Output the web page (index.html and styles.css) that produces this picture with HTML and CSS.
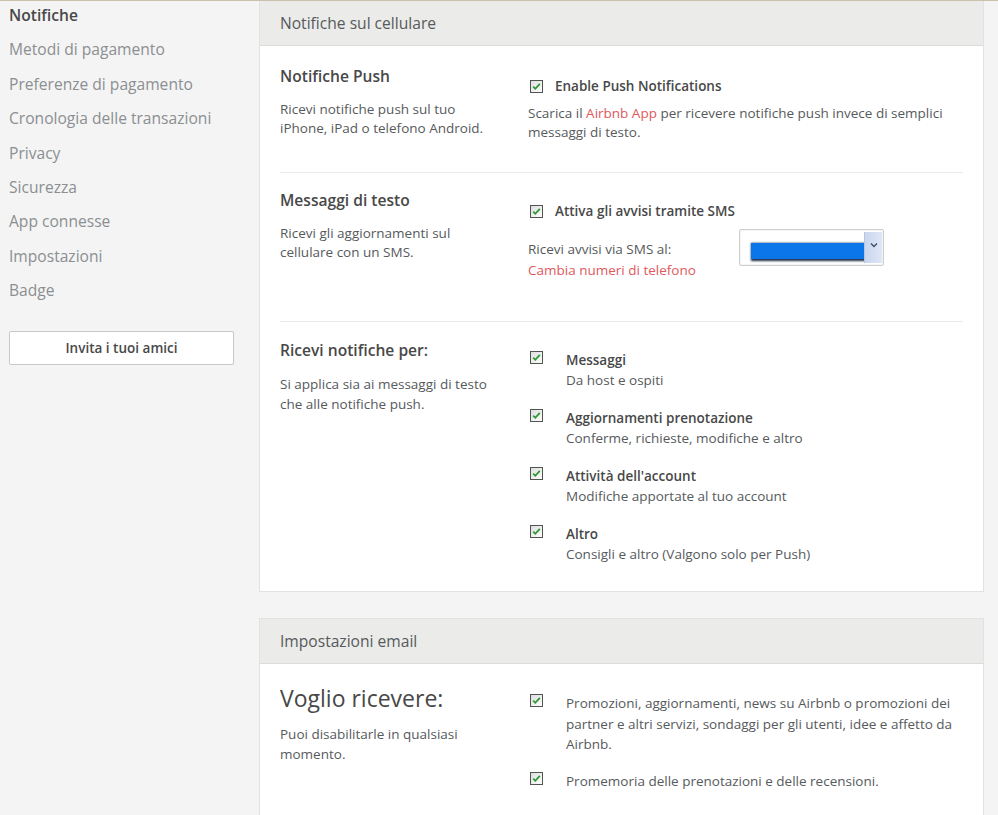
FILE: index.html
```html
<!DOCTYPE html>
<html lang="it">
<head>
<meta charset="utf-8">
<title>Notifiche</title>
<link rel="stylesheet" href="styles.css">
</head>
<body>
<div class="topline"></div>
<div class="layout">
  <aside class="sidebar">
    <ul class="nav">
      <li class="active">Notifiche</li>
      <li>Metodi di pagamento</li>
      <li>Preferenze di pagamento</li>
      <li>Cronologia delle transazioni</li>
      <li>Privacy</li>
      <li>Sicurezza</li>
      <li>App connesse</li>
      <li>Impostazioni</li>
      <li>Badge</li>
    </ul>
    <button class="invite">Invita i tuoi amici</button>
  </aside>

  <main class="main">
    <section class="card">
      <div class="card-header">Notifiche sul cellulare</div>
      <div class="card-body">
        <div class="row row-first">
          <div class="col-left">
            <h3>Notifiche Push</h3>
            <p>Ricevi notifiche push sul tuo<br>iPhone, iPad o telefono Android.</p>
          </div>
          <div class="col-right">
            <div class="check-line">
              <svg class="cb" viewBox="0 0 13 13"><defs><linearGradient id="g1" x1="0" y1="0" x2="1" y2="1"><stop offset="0" stop-color="#dcdcdc"/><stop offset="1" stop-color="#ffffff"/></linearGradient></defs><rect x="0.5" y="0.5" width="12" height="12" fill="url(#g1)" stroke="#4f5650"/><path d="M3.2 6.6 L5.3 8.8 L9.8 3.8" fill="none" stroke="#2f9a35" stroke-width="1.8"/></svg>
              <span class="strong">Enable Push Notifications</span>
            </div>
            <p class="note">Scarica il <span class="red">Airbnb App</span> per ricevere notifiche push invece di semplici messaggi di testo.</p>
          </div>
        </div>

        <div class="row row-sms">
          <div class="col-left">
            <h3>Messaggi di testo</h3>
            <p>Ricevi gli aggiornamenti sul<br>cellulare con un SMS.</p>
          </div>
          <div class="col-right">
            <div class="check-line">
              <svg class="cb" viewBox="0 0 13 13"><rect x="0.5" y="0.5" width="12" height="12" fill="url(#g1)" stroke="#4f5650"/><path d="M3.2 6.6 L5.3 8.8 L9.8 3.8" fill="none" stroke="#2f9a35" stroke-width="1.8"/></svg>
              <span class="strong">Attiva gli avvisi tramite SMS</span>
            </div>
            <div class="sms-line">
              <div class="sms-text">
                <div>Ricevi avvisi via SMS al:</div>
                <div class="red">Cambia numeri di telefono</div>
              </div>
              <div class="select">
                <div class="select-value"><span class="redact"></span></div>
                <div class="select-arrow">
                  <svg viewBox="0 0 8 6" width="8" height="6"><path d="M1 1.5 L4 4.5 L7 1.5" fill="none" stroke="#3b4f6e" stroke-width="1.4"/></svg>
                </div>
              </div>
            </div>
          </div>
        </div>

        <div class="row row-last">
          <div class="col-left">
            <h3>Ricevi notifiche per:</h3>
            <p class="loose">Si applica sia ai messaggi di testo<br>che alle notifiche push.</p>
          </div>
          <div class="col-right">
            <ul class="opts">
              <li>
                <svg class="cb" viewBox="0 0 13 13"><rect x="0.5" y="0.5" width="12" height="12" fill="url(#g1)" stroke="#4f5650"/><path d="M3.2 6.6 L5.3 8.8 L9.8 3.8" fill="none" stroke="#2f9a35" stroke-width="1.8"/></svg>
                <div><div class="strong">Messaggi</div><div>Da host e ospiti</div></div>
              </li>
              <li>
                <svg class="cb" viewBox="0 0 13 13"><rect x="0.5" y="0.5" width="12" height="12" fill="url(#g1)" stroke="#4f5650"/><path d="M3.2 6.6 L5.3 8.8 L9.8 3.8" fill="none" stroke="#2f9a35" stroke-width="1.8"/></svg>
                <div><div class="strong">Aggiornamenti prenotazione</div><div>Conferme, richieste, modifiche e altro</div></div>
              </li>
              <li>
                <svg class="cb" viewBox="0 0 13 13"><rect x="0.5" y="0.5" width="12" height="12" fill="url(#g1)" stroke="#4f5650"/><path d="M3.2 6.6 L5.3 8.8 L9.8 3.8" fill="none" stroke="#2f9a35" stroke-width="1.8"/></svg>
                <div><div class="strong">Attività dell'account</div><div>Modifiche apportate al tuo account</div></div>
              </li>
              <li>
                <svg class="cb" viewBox="0 0 13 13"><rect x="0.5" y="0.5" width="12" height="12" fill="url(#g1)" stroke="#4f5650"/><path d="M3.2 6.6 L5.3 8.8 L9.8 3.8" fill="none" stroke="#2f9a35" stroke-width="1.8"/></svg>
                <div><div class="strong">Altro</div><div>Consigli e altro (Valgono solo per Push)</div></div>
              </li>
            </ul>
          </div>
        </div>
      </div>
    </section>

    <section class="card card-email">
      <div class="card-header">Impostazioni email</div>
      <div class="card-body">
        <div class="row row-email">
          <div class="col-left">
            <h2>Voglio ricevere:</h2>
            <p class="loose">Puoi disabilitarle in qualsiasi<br>momento.</p>
          </div>
          <div class="col-right">
            <ul class="opts opts-email">
              <li>
                <svg class="cb" viewBox="0 0 13 13"><rect x="0.5" y="0.5" width="12" height="12" fill="url(#g1)" stroke="#4f5650"/><path d="M3.2 6.6 L5.3 8.8 L9.8 3.8" fill="none" stroke="#2f9a35" stroke-width="1.8"/></svg>
                <div>Promozioni, aggiornamenti, news su Airbnb o promozioni dei partner e altri servizi, sondaggi per gli utenti, idee e affetto da Airbnb.</div>
              </li>
              <li>
                <svg class="cb" viewBox="0 0 13 13"><rect x="0.5" y="0.5" width="12" height="12" fill="url(#g1)" stroke="#4f5650"/><path d="M3.2 6.6 L5.3 8.8 L9.8 3.8" fill="none" stroke="#2f9a35" stroke-width="1.8"/></svg>
                <div>Promemoria delle prenotazioni e delle recensioni.</div>
              </li>
            </ul>
          </div>
        </div>
      </div>
    </section>
  </main>
</div>
</body>
</html>
```

FILE: styles.css
```css
* { box-sizing: border-box; }

html, body {
  margin: 0;
  padding: 0;
  background: #f4f4f4;
  font-family: "Open Sans", "Liberation Sans", sans-serif;
  color: #565a5c;
  overflow: hidden;
}

.topline {
  height: 1px;
  background: #c9c1ab;
}

.layout {
  display: flex;
  align-items: flex-start;
}

/* Sidebar */
.sidebar {
  width: 259px;
  flex: none;
  padding-left: 9px;
}

.nav {
  list-style: none;
  margin: -3px 0 0;
  padding: 0;
}

.nav li {
  font-size: 15.6px;
  line-height: 34.4px;
  color: #8b8f91;
  white-space: nowrap;
}

.nav li.active {
  color: #484848;
  font-weight: 600;
}

.invite {
  display: block;
  margin-top: 23px;
  width: 225px;
  height: 34px;
  background: #fff;
  border: 1px solid #c8c8c8;
  border-radius: 2px;
  font-family: inherit;
  font-size: 13.5px;
  font-weight: 600;
  color: #484848;
  padding: 0;
}

/* Main */
.main {
  width: 725px;
  flex: none;
}

.card {
  background: #fff;
  border: 1px solid #e2e2e2;
  border-top: none;
}

.card-email {
  margin-top: 26px;
  border-top: 1px solid #e2e2e2;
}

.card-header {
  background: #ebebe9;
  border-bottom: 1px solid #dcdcd8;
  height: 45px;
  padding: 0 20px;
  font-size: 15.6px;
  line-height: 44px;
  color: #565a5c;
}

.card-body {
  padding: 0 20px;
}

.row {
  display: flex;
  border-bottom: 1px solid #ebebeb;
}

.row-first { padding: 20px 0 30px; }
.row-sms { padding: 17px 0 40px; }
.row-last { padding: 18px 0 27px; border-bottom: none; }
.row-email { padding: 19px 0 24px; border-bottom: none; }

.col-left {
  width: 248px;
  flex: none;
}

.col-right {
  flex: 1;
  padding-top: 10px;
}

.row-sms .col-right { padding-top: 11px; }

h3 {
  margin: 0 0 14px;
  font-size: 15.6px;
  line-height: 20px;
  font-weight: 600;
  color: #484848;
}

h2 {
  margin: 0 0 11px;
  font-size: 23px;
  line-height: 30px;
  font-weight: 400;
  color: #484848;
}

p {
  margin: 0;
  font-size: 13.5px;
  line-height: 19px;
}

p.loose { line-height: 20px; }

.red {
  color: #e0585c;
}

.strong {
  font-weight: 600;
  color: #484848;
}

.cb {
  width: 13px;
  height: 13px;
  flex: none;
  display: block;
}

.check-line {
  display: flex;
  align-items: center;
  gap: 12px;
  padding-left: 2px;
  font-size: 13.5px;
  line-height: 20px;
}

.note {
  margin-top: 8px;
  padding-right: 6px;
}

/* SMS */
.sms-line {
  display: flex;
  margin-top: 8px;
  font-size: 13.5px;
  line-height: 21px;
}

.sms-text {
  width: 211px;
  flex: none;
  padding-top: 10px;
}

.select {
  display: flex;
  width: 145px;
  height: 37px;
  border: 1px solid #cfcfcf;
  border-radius: 2px;
  background: #fff;
  box-shadow: inset 0 0 0 1px #f4f4f4;
}

.select-value {
  flex: 1;
  padding: 13px 0 0 11px;
}

.redact {
  display: block;
  width: 113px;
  height: 16px;
  background: #0a76ea;
  box-shadow: 1px 1px 2px 1px #1c2e49;
}

.select-arrow {
  width: 18px;
  flex: none;
  margin: 2px 1px 2px 0;
  background: linear-gradient(to right, #c9d6ee, #dfe7f6);
  border-left: 1px solid #b8c5de;
  display: flex;
  align-items: flex-start;
  justify-content: center;
  padding-top: 10px;
}

/* Option lists */
.opts {
  list-style: none;
  margin: 0;
  padding: 0 0 0 2px;
  display: flex;
  flex-direction: column;
  gap: 18px;
}

.opts li {
  display: flex;
  gap: 23px;
  font-size: 13.5px;
  line-height: 20px;
}

.opts li .cb { margin-top: 1px; }

.opts-email { gap: 16px; padding-top: 0; }
.opts-email li { line-height: 20.5px; }
```
